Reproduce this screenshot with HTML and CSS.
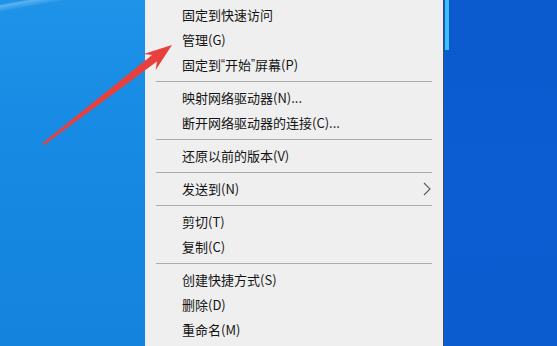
FILE: index.html
```html
<!DOCTYPE html>
<html lang="zh-CN">
<head>
<meta charset="utf-8">
<title>右键菜单</title>
<link rel="stylesheet" href="styles.css">
</head>
<body>
<div class="screen">
  <div class="desk-left"></div>
  <div class="menu">
    <div class="item">固定到快速访问</div>
    <div class="item">管理(G)</div>
    <div class="item">固定到<span class="q">“</span>开始<span class="q">”</span>屏幕(P)</div>
    <div class="sep"></div>
    <div class="item">映射网络驱动器(N)...</div>
    <div class="item">断开网络驱动器的连接(C)...</div>
    <div class="sep"></div>
    <div class="item">还原以前的版本(V)</div>
    <div class="sep"></div>
    <div class="item">发送到(N)
      <svg class="chev" width="8" height="14" viewBox="0 0 8 14"><polyline points="1,1 7,7 1,13" fill="none" stroke="#5a5a5a" stroke-width="1.1"/></svg>
    </div>
    <div class="sep"></div>
    <div class="item">剪切(T)</div>
    <div class="item">复制(C)</div>
    <div class="sep"></div>
    <div class="item">创建快捷方式(S)</div>
    <div class="item">删除(D)</div>
    <div class="item">重命名(M)</div>
    <div class="sep"></div>
  </div>
  <div class="desk-right">
    <div class="edge"></div>
  </div>
  <svg class="arrow" width="557" height="346" viewBox="0 0 557 346">
    <polygon points="42,144 44,142 152.1,55.1 143.6,53.9 172,45 155.7,69.9 156.9,61.5 44,145" fill="#e8403c"/>
  </svg>
</div>
</body>
</html>
```
FILE: styles.css
```css
html, body {
  margin: 0;
  padding: 0;
}
body {
  width: 557px;
  height: 346px;
  overflow: hidden;
  font-family: "Noto Sans CJK SC", "Noto Sans", sans-serif;
}
.screen {
  position: relative;
  display: flex;
  width: 557px;
  height: 346px;
  overflow: hidden;
}
.desk-left {
  width: 145px;
  flex: none;
  background:
    linear-gradient(170deg, rgba(255,255,255,0) 0px, rgba(255,255,255,0) 4px, rgba(210,235,255,0.35) 6px, rgba(255,255,255,0) 12px),
    linear-gradient(180deg, #1e93e8 0%, #178ae3 40%, #1483de 100%);
}
.menu {
  width: 297px;
  flex: none;
  background: #efefef;
  border-left: 1px solid #e4ebf2;
  border-right: 1px solid #3b4f6b;
  padding-top: 2px;
  box-sizing: content-box;
}
.item {
  height: 25px;
  line-height: 25px;
  padding-left: 36px;
  padding-right: 12px;
  font-size: 13px;
  color: #141414;
  display: flex;
  align-items: center;
  white-space: nowrap;
}
.q {
  font-family: "Liberation Sans", sans-serif;
  font-size: 12px;
}
.chev {
  margin-left: auto;
  display: block;
}
.sep {
  height: 8px;
  display: flex;
  align-items: center;
  margin-left: 10px;
  margin-right: 11px;
}
.sep::before {
  content: "";
  display: block;
  width: 100%;
  height: 1px;
  background: #acacac;
}
.desk-right {
  flex: 1;
  background: linear-gradient(180deg, #0b5ace 0%, #0b5dd1 50%, #0a5ccf 100%);
  padding-left: 1px;
}
.edge {
  width: 4px;
  height: 50px;
  background: #3cc2f4;
}
.arrow {
  position: absolute;
  left: 0;
  top: 0;
  pointer-events: none;
}
```
